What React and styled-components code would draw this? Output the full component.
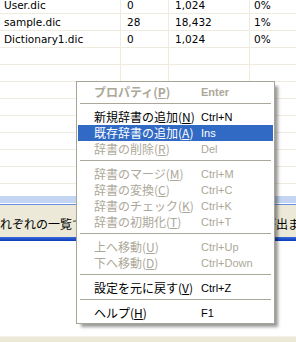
import React from 'react';
import styled, { createGlobalStyle } from 'styled-components';

const GlobalStyle = createGlobalStyle`
  html, body {
    margin: 0;
    padding: 0;
    background: #fff;
  }
  body {
    width: 296px;
    height: 342px;
    overflow: hidden;
  }
`;

const Page = styled.div`
  position: relative;
  width: 296px;
  height: 342px;
  display: flex;
  flex-direction: column;
  background: #fff;
  overflow: hidden;
`;

const List = styled.div`
  flex: none;
  height: 196px;
  overflow: hidden;
`;

const ListBody = styled.div`
  margin-top: -3px;
`;

const Row = styled.div`
  display: grid;
  grid-template-columns: 121px 48px 81px 1fr;
  height: 16px;
  border-bottom: 1px solid #efecdf;
  font-family: "DejaVu Sans", sans-serif;
  font-size: 10.5px;
  line-height: 16px;
  color: #000;
`;

const Cell = styled.div`
  padding-left: ${p => p.$pad}px;
  border-right: ${p => (p.$last ? 'none' : '1px solid #efecdf')};
  white-space: nowrap;
  overflow: hidden;
`;

const SelBand = styled.div`
  flex: none;
  height: 7px;
  background: #c4d4f3;
  border-bottom: 1px solid #fff;
`;

const BlueRule = styled.div`
  flex: none;
  height: 1px;
  background: #6b8fe0;
`;

const Hint = styled.div`
  flex: none;
  height: 32px;
  box-sizing: border-box;
  padding-top: 11px;
  background: #ece9d8;
  font-family: "Noto Sans CJK JP", sans-serif;
  font-size: 12px;
  line-height: 16px;
  color: #000;
  white-space: nowrap;
  overflow: hidden;
`;

const HintText = styled.span`
  display: inline-block;
  margin-left: -12px;
`;

const FocusBar = styled.div`
  flex: none;
  height: 4px;
  background: linear-gradient(#3a6ad8, #0b3dbb);
`;

const Blank = styled.div`
  flex: 1;
  background: #fff;
`;

const BottomStrip = styled.div`
  flex: none;
  height: 5px;
  background: #ece9d8;
  border-top: 1px solid #f4f2e8;
`;

const Menu = styled.div`
  position: absolute;
  left: 76px;
  top: 81px;
  width: 199px;
  box-sizing: border-box;
  padding: 2px 1px;
  background: #fff;
  border: 1px solid #a7a495;
  box-shadow: 4px 4px 3px -1px rgba(0, 0, 0, 0.4);
  font-family: "Noto Sans CJK JP", sans-serif;
`;

const Item = styled.div`
  display: grid;
  grid-template-columns: 107px 1fr;
  height: 16px;
  padding-left: 16px;
  line-height: 16px;
  font-size: 12px;
  font-weight: ${p => (p.$bold ? 700 : 400)};
  color: ${p => (p.$active ? '#fff' : p.$disabled ? '#aca899' : '#000')};
  background: ${p => (p.$active ? '#316ac5' : 'transparent')};
  white-space: nowrap;
`;

const Label = styled.span`
  overflow: visible;
`;

const Shortcut = styled.span`
  font-family: "Liberation Sans", sans-serif;
  font-size: 11px;
`;

const Key = styled.span`
  text-decoration: underline;
  text-underline-offset: 1px;
`;

const Separator = styled.div`
  height: 1px;
  margin: 3px 2px 5px;
  background: #aca899;
`;

const rows = [
  ['User.dic', '0', '1,024', '0%'],
  ['sample.dic', '28', '18,432', '1%'],
  ['Dictionary1.dic', '0', '1,024', '0%'],
  ['', '', '', ''],
  ['', '', '', ''],
  ['', '', '', ''],
  ['', '', '', ''],
  ['', '', '', ''],
  ['', '', '', ''],
  ['', '', '', ''],
  ['', '', '', ''],
  ['', '', '', ''],
];

const menu = [
  { label: 'プロパティ', key: 'P', shortcut: 'Enter', disabled: true, bold: true },
  'sep',
  { label: '新規辞書の追加', key: 'N', shortcut: 'Ctrl+N' },
  { label: '既存辞書の追加', key: 'A', shortcut: 'Ins', active: true },
  { label: '辞書の削除', key: 'R', shortcut: 'Del', disabled: true },
  'sep',
  { label: '辞書のマージ', key: 'M', shortcut: 'Ctrl+M', disabled: true },
  { label: '辞書の変換', key: 'C', shortcut: 'Ctrl+C', disabled: true },
  { label: '辞書のチェック', key: 'K', shortcut: 'Ctrl+K', disabled: true },
  { label: '辞書の初期化', key: 'T', shortcut: 'Ctrl+T', disabled: true },
  'sep',
  { label: '上へ移動', key: 'U', shortcut: 'Ctrl+Up', disabled: true },
  { label: '下へ移動', key: 'D', shortcut: 'Ctrl+Down', disabled: true },
  'sep',
  { label: '設定を元に戻す', key: 'V', shortcut: 'Ctrl+Z' },
  'sep',
  { label: 'ヘルプ', key: 'H', shortcut: 'F1' },
];

export default function App() {
  return (
    <Page>
      <GlobalStyle />
      <List>
        <ListBody>
          {rows.map((r, i) => (
            <Row key={i}>
              <Cell $pad={4}>{r[0]}</Cell>
              <Cell $pad={6}>{r[1]}</Cell>
              <Cell $pad={6}>{r[2]}</Cell>
              <Cell $pad={4} $last>{r[3]}</Cell>
            </Row>
          ))}
        </ListBody>
      </List>
      <SelBand />
      <BlueRule />
      <Hint>
        <HintText>それぞれの一覧で右クリックすると各種のメニューが出ます。</HintText>
      </Hint>
      <FocusBar />
      <Blank />
      <BottomStrip />

      <Menu>
        {menu.map((m, i) =>
          m === 'sep' ? (
            <Separator key={i} />
          ) : (
            <Item key={i} $disabled={m.disabled} $active={m.active} $bold={m.bold}>
              <Label>
                {m.label}(<Key>{m.key}</Key>)
              </Label>
              <Shortcut>{m.shortcut}</Shortcut>
            </Item>
          )
        )}
      </Menu>
    </Page>
  );
}
